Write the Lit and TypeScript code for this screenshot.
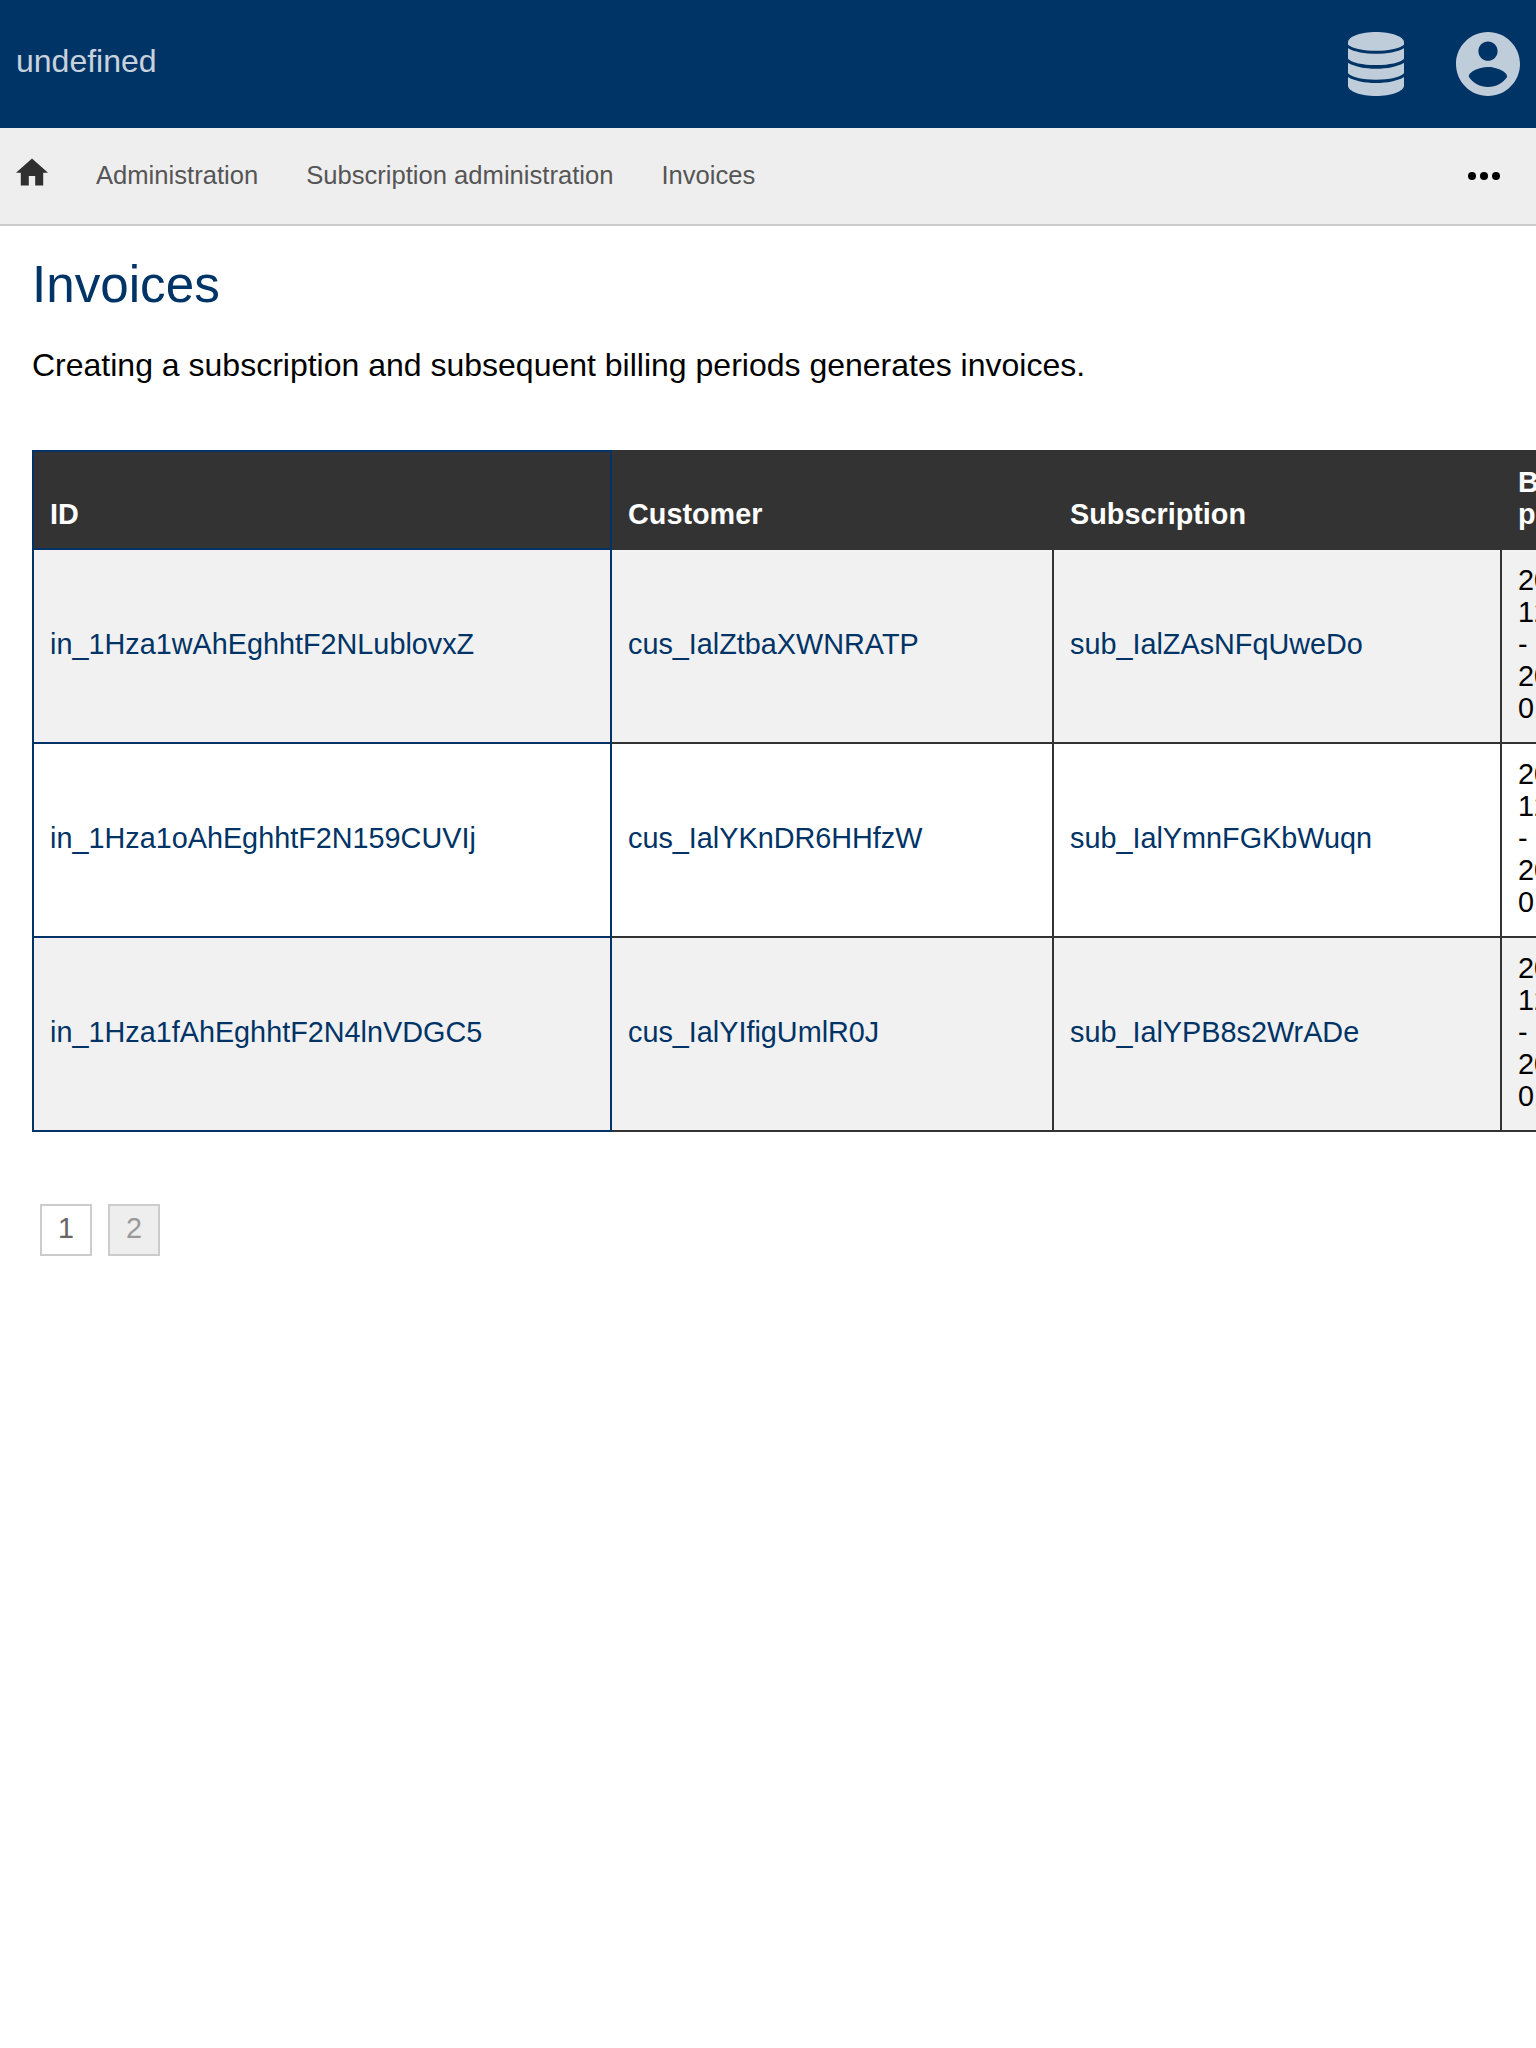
import { LitElement, html, css } from "lit";
import { customElement } from "lit/decorators.js";

interface Invoice {
  id: string;
  customer: string;
  subscription: string;
  period: string;
}

const INVOICES: Invoice[] = [
  { id: "in_1Hza1wAhEghhtF2NLublovxZ", customer: "cus_IalZtbaXWNRATP", subscription: "sub_IalZAsNFqUweDo", period: "2020-12-18 - 2021-01-18" },
  { id: "in_1Hza1oAhEghhtF2N159CUVIj", customer: "cus_IalYKnDR6HHfzW", subscription: "sub_IalYmnFGKbWuqn", period: "2020-12-18 - 2021-01-18" },
  { id: "in_1Hza1fAhEghhtF2N4lnVDGC5", customer: "cus_IalYIfigUmlR0J", subscription: "sub_IalYPB8s2WrADe", period: "2020-12-18 - 2021-01-18" },
];

@customElement("app-root")
export class AppRoot extends LitElement {
  static styles = css`
    :host {
      display: block;
      height: 2048px;
      overflow: hidden;
      background: #fff;
      color: #000;
      font-family: "Liberation Sans", Arial, sans-serif;
    }
    svg { display: block; flex: none; }
    a { color: inherit; text-decoration: none; }
    .header {
      display: flex;
      align-items: center;
      height: 128px;
      padding: 0 16px;
      box-sizing: border-box;
      background: #003366;
    }
    .title {
      flex: 1;
      padding-bottom: 6px;
      font-size: 32px;
      line-height: 36px;
      color: rgba(255, 255, 255, 0.8);
    }
    .tools { display: flex; gap: 52px; fill: #bfccd9; }
    .nav {
      display: flex;
      align-items: center;
      height: 98px;
      padding: 0 36px 0 16px;
      box-sizing: border-box;
      background: #eee;
      border-bottom: 2px solid #ccc;
      font-size: 25.6px;
      line-height: 30px;
      color: #555;
    }
    .home { fill: #303030; margin: 0 48px 7px 0; }
    .crumbs { display: flex; gap: 48px; flex: 1; padding-bottom: 2px; }
    .main { padding: 30px 32px 32px; }
    h1 { margin: 0; font-weight: 400; font-size: 51.2px; line-height: 58px; color: #003366; }
    .intro { margin: 33px 0 66px; font-size: 32px; line-height: 37px; }
    table {
      width: 1592px;
      table-layout: fixed;
      border-collapse: collapse;
      font-size: 28.8px;
      line-height: 32px;
    }
    .c-id { width: 578px; }
    .c-customer { width: 442px; }
    .c-subscription { width: 448px; }
    .c-period { width: 122px; }
    th, td { border: 2px solid #333; padding: 14px 16px 18px; text-align: left; }
    th { background: #333; color: #fff; vertical-align: bottom; }
    td { vertical-align: middle; }
    tbody tr:nth-child(odd) { background: #f1f1f1; }
    .id { border-color: #003366; }
    .link { color: #003366; }
    .pages { display: flex; gap: 16px; padding: 72px 8px 0; }
    .page {
      width: 52px;
      height: 52px;
      box-sizing: border-box;
      border: 2px solid #ccc;
      font-size: 28.8px;
      line-height: 44px;
      text-align: center;
      color: #666;
    }
    .current { background: #eee; color: #999; }
  `;

  render() {
    return html`
      <header class="header">
        <div class="title">undefined</div>
        <div class="tools">
          <svg width="56" height="64" viewBox="0 0 56 64">
            <path d="M28 0C43 0 56 4.300 56 10.500V12.700C50.500 16.700 40 18.700 28 18.700S5.500 16.700 0 12.700V10.500C0 4.300 13 0 28 0z"/>
            <path d="M0 16.300C6 20 17 21.800 28 21.800S50 20 56 16.300V26.800C52 30.800 42 33.100 28 33.100S4 30.800 0 26.800z"/>
            <path d="M0 30.700C6 34.600 17 36.700 28 36.700S50 34.600 56 30.700V41.300C52 45.300 42 47.700 28 47.700S4 45.300 0 41.300z"/>
            <path d="M0 45.100C6 49 17 51.100 28 51.100S50 49 56 45.100V53.500C56 59.500 43 64 28 64S0 59.500 0 53.500z"/>
          </svg>
          <svg width="64" height="64" viewBox="2 2 20 20">
            <path d="M12 2C6.480 2 2 6.480 2 12s4.480 10 10 10 10-4.480 10-10S17.520 2 12 2zm0 3c1.660 0 3 1.340 3 3s-1.340 3-3 3-3-1.340-3-3 1.340-3 3-3zm0 14.200c-2.500 0-4.710-1.280-6-3.220.030-1.990 4-3.080 6-3.080 1.990 0 5.970 1.090 6 3.080-1.290 1.940-3.500 3.220-6 3.220z"/>
          </svg>
        </div>
      </header>
      <nav class="nav">
        <svg class="home" width="32" height="29" viewBox="2 2.75 20 18.125"><path d="M10 20v-6h4v6h5v-8h3L12 3 2 12h3v8z"/></svg>
        <div class="crumbs"><a>Administration</a><a>Subscription administration</a><a>Invoices</a></div>
        <svg width="32" height="8" viewBox="0 0 32 8">
          <circle cx="4" cy="4" r="4"/><circle cx="16" cy="4" r="4"/><circle cx="28" cy="4" r="4"/>
        </svg>
      </nav>
      <main class="main">
        <h1>Invoices</h1>
        <p class="intro">Creating a subscription and subsequent billing periods generates invoices.</p>
        <table>
          <colgroup><col class="c-id" /><col class="c-customer" /><col class="c-subscription" /><col class="c-period" /></colgroup>
          <thead>
            <tr><th class="id">ID</th><th>Customer</th><th>Subscription</th><th>Billing period</th></tr>
          </thead>
          <tbody>
            ${INVOICES.map((row) => html`<tr>
              <td class="id link"><a>${row.id}</a></td>
              <td class="link"><a>${row.customer}</a></td>
              <td class="link"><a>${row.subscription}</a></td>
              <td>${row.period}</td>
            </tr>`)}
          </tbody>
        </table>
        <div class="pages"><a class="page">1</a><a class="page current">2</a></div>
      </main>
    `;
  }
}
